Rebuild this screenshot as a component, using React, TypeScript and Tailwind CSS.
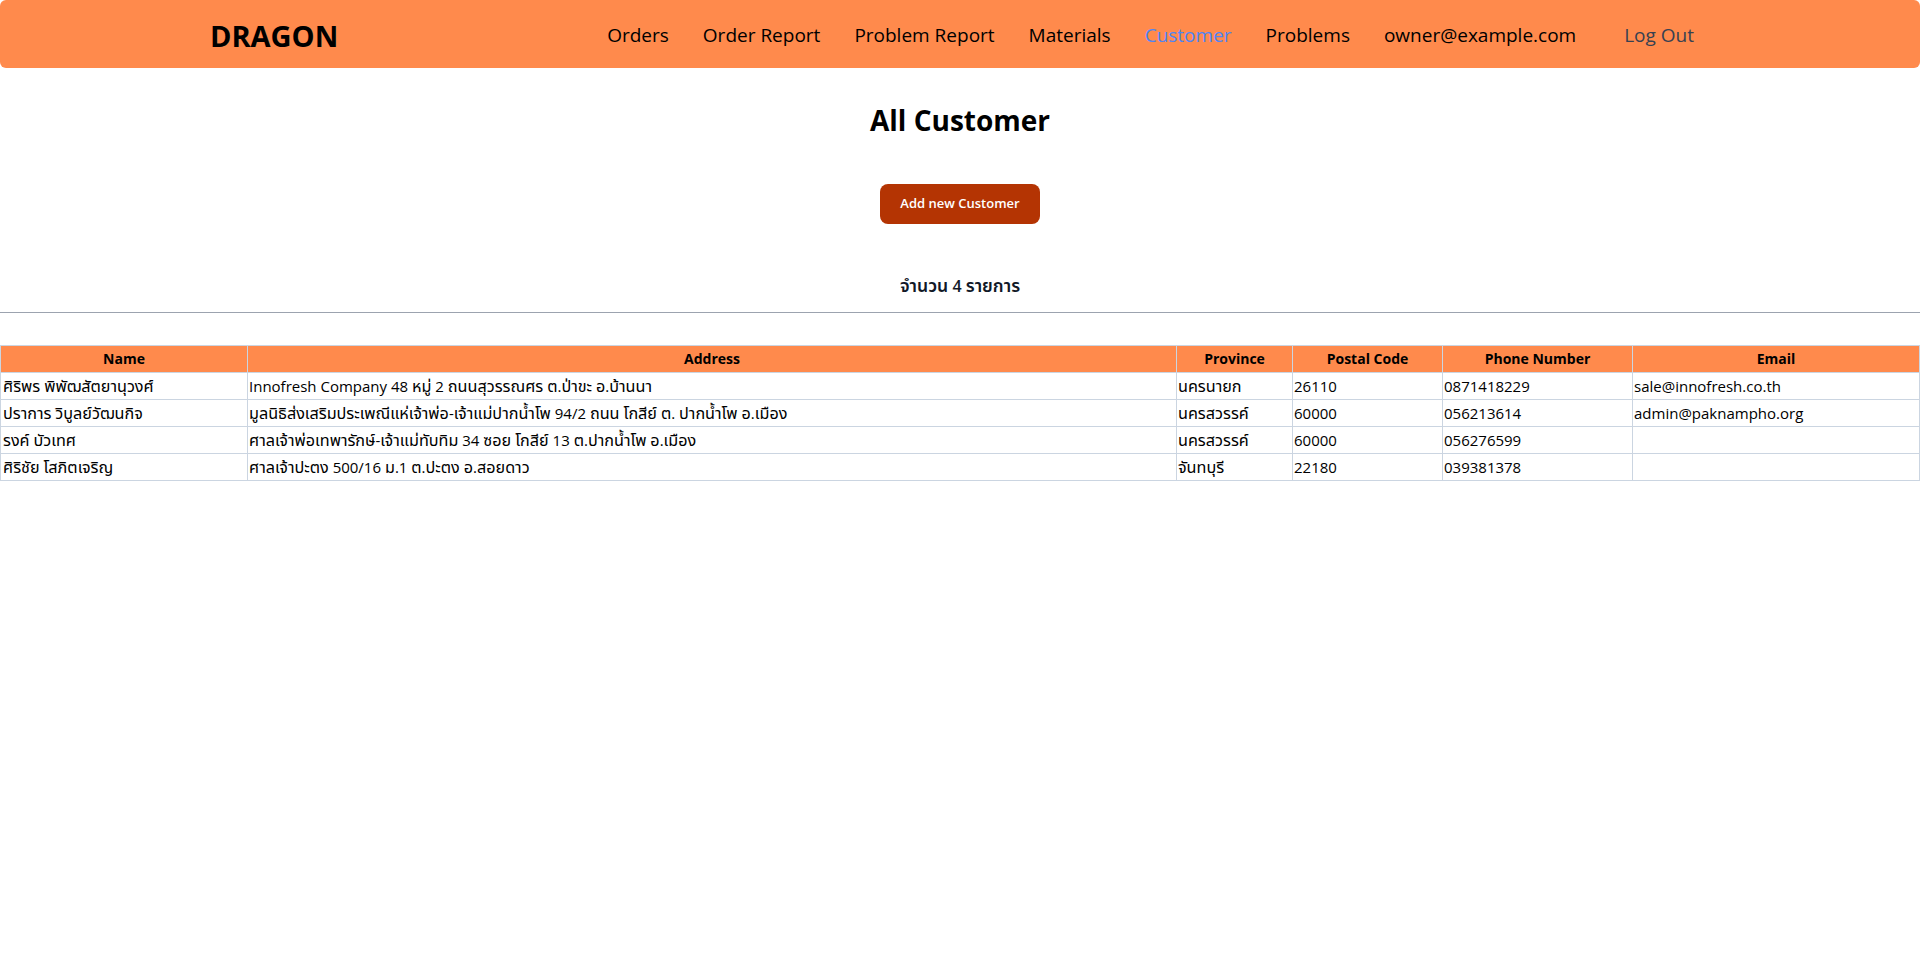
import React from "react";

type Customer = {
    name: string;
    address: string;
    province: string;
    postalCode: string;
    phone: string;
    email: string;
};

const customers: Customer[] = [
    {
        name: "ศิริพร พิพัฒสัตยานุวงศ์",
        address: "Innofresh Company 48 หมู่ 2 ถนนสุวรรณศร ต.ป่าขะ อ.บ้านนา",
        province: "นครนายก",
        postalCode: "26110",
        phone: "0871418229",
        email: "sale@innofresh.co.th",
    },
    {
        name: "ปราการ วิบูลย์วัฒนกิจ",
        address: "มูลนิธิส่งเสริมประเพณีแห่เจ้าพ่อ-เจ้าแม่ปากน้ำโพ 94/2 ถนน โกสีย์ ต. ปากน้ำโพ อ.เมือง",
        province: "นครสวรรค์",
        postalCode: "60000",
        phone: "056213614",
        email: "admin@paknampho.org",
    },
    {
        name: "รงค์ บัวเทศ",
        address: "ศาลเจ้าพ่อเทพารักษ์-เจ้าแม่ทับทิม 34 ซอย โกสีย์ 13 ต.ปากน้ำโพ อ.เมือง",
        province: "นครสวรรค์",
        postalCode: "60000",
        phone: "056276599",
        email: "",
    },
    {
        name: "ศิริชัย โสภิตเจริญ",
        address: "ศาลเจ้าปะตง 500/16 ม.1 ต.ปะตง อ.สอยดาว",
        province: "จันทบุรี",
        postalCode: "22180",
        phone: "039381378",
        email: "",
    },
];

const links = ["Orders", "Order Report", "Problem Report", "Materials", "Customer", "Problems"];

// thai glyphs in the fallback font come out small, bump them a bit
function Th({ text, big }: { text: string; big?: boolean }) {
    return (
        <>
            {text.split(/([\u0E00-\u0E7F]+)/).map((part, i) =>
                /[\u0E00-\u0E7F]/.test(part) ? (
                    <span key={i} className={big ? "text-[1.1em]" : "text-[1.08em]"}>
                        {part}
                    </span>
                ) : (
                    part
                )
            )}
        </>
    );
}

function Navbar() {
    return (
        <nav className="bg-[#ff8a4c] rounded-md h-[68px] flex items-center">
            <div className="w-[1500px] mx-auto flex items-center justify-between pt-[3px]">
                <span className="text-[29px] font-bold text-black leading-9">DRAGON</span>
                <ul className="flex items-center gap-[34px] text-[19px] text-black">
                    {links.map((l) => (
                        <li key={l} className={l === "Customer" ? "text-[#4d85f5]" : ""}>
                            {l}
                        </li>
                    ))}
                    <li>owner@example.com</li>
                    <li>
                        <button className="pl-[14px] pr-4 text-[#374151]">Log Out</button>
                    </li>
                </ul>
            </div>
        </nav>
    );
}

function App() {
    return (
        <div className="min-h-screen bg-white font-['Open_Sans','Noto_Sans_Thai','Tahoma',sans-serif]">
            <Navbar />

            <h1 className="mt-[34px] text-center text-[28px] leading-9 font-bold text-black">All Customer</h1>

            <div className="mt-[46px] flex justify-center">
                <button className="h-10 px-5 rounded-lg bg-[#b43403] text-white text-[13px] font-semibold">
                    Add new Customer
                </button>
            </div>

            <p className="mt-[51px] h-5 text-center text-base font-semibold leading-5 text-[#111827]">
                <Th text="จำนวน 4 รายการ" big />
            </p>

            <hr className="mt-[17px] border-t border-[#9ca3af]" />

            <table className="mt-[32px] w-full table-fixed border-collapse text-[15px] leading-5 text-black">
                <colgroup>
                    <col className="w-[247px]" />
                    <col className="w-[929px]" />
                    <col className="w-[116px]" />
                    <col className="w-[150px]" />
                    <col className="w-[190px]" />
                    <col />
                </colgroup>
                <thead>
                    <tr className="bg-[#ff8a4c]">
                        {["Name", "Address", "Province", "Postal Code", "Phone Number", "Email"].map((h) => (
                            <th key={h} className="border border-[#cbd5e1] py-[3px] text-sm leading-5 font-bold text-center">
                                {h}
                            </th>
                        ))}
                    </tr>
                </thead>
                <tbody>
                    {customers.map((c) => (
                        <tr key={c.name}>
                            <td className="border border-[#cbd5e1] py-[3px] px-[2px] whitespace-nowrap">
                                <Th text={c.name} />
                            </td>
                            <td className="border border-[#cbd5e1] py-[3px] px-[1px] whitespace-nowrap">
                                <Th text={c.address} />
                            </td>
                            <td className="border border-[#cbd5e1] py-[3px] px-[1px] whitespace-nowrap">
                                <Th text={c.province} />
                            </td>
                            <td className="border border-[#cbd5e1] py-[3px] px-[1px]">{c.postalCode}</td>
                            <td className="border border-[#cbd5e1] py-[3px] px-[1px]">{c.phone}</td>
                            <td className="border border-[#cbd5e1] py-[3px] px-[1px]">{c.email}</td>
                        </tr>
                    ))}
                </tbody>
            </table>
        </div>
    );
}

export default App;
